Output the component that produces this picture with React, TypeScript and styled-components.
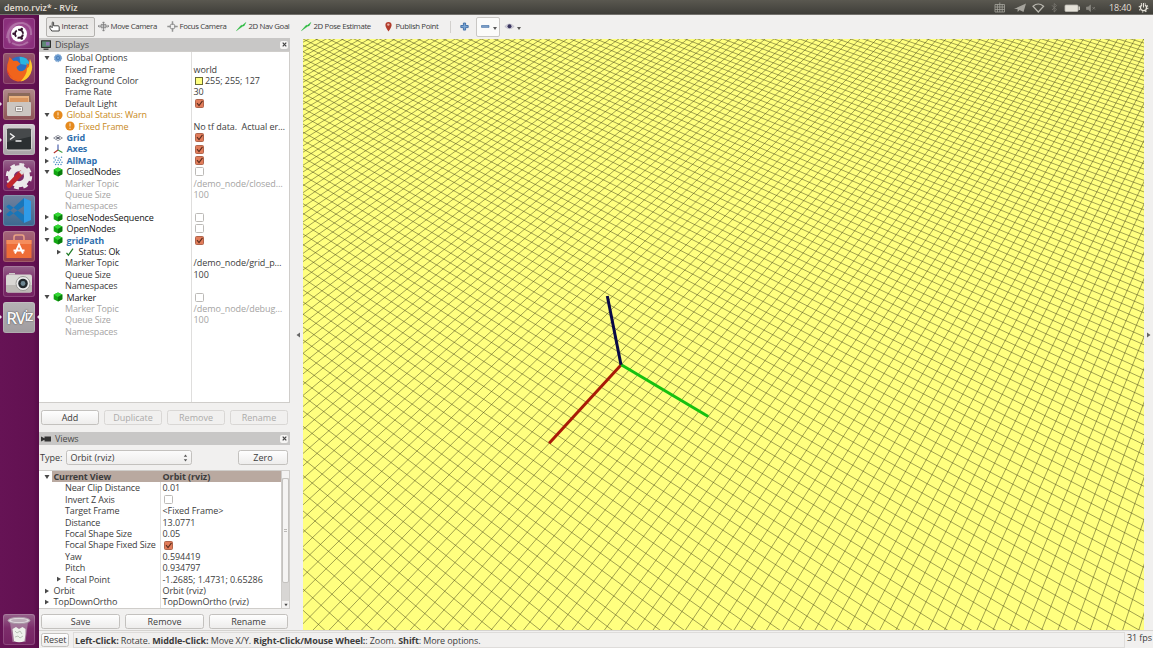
import React from "react";
import styled, { createGlobalStyle, css } from "styled-components";

const Global = createGlobalStyle`
  * { box-sizing: border-box; }
  body { margin: 0; overflow: hidden; background: #f2f1f0; }
`;

const Screen = styled.div`
  width: 1153px;
  height: 648px;
  display: flex;
  flex-direction: column;
  font-family: "Open Sans", "Noto Sans", sans-serif;
  font-size: 9px;
  line-height: 11.4px;
  color: #3c3c3c;
  background: #f1f0ef;
  white-space: pre;
  overflow: hidden;
`;

/* ---------- top bar ---------- */
const TopBar = styled.header`
  height: 15px;
  flex: none;
  display: flex;
  align-items: center;
  padding: 0 4px;
  background: linear-gradient(#5a5850, #403f3a 90%, #8d8b86);
  color: #e2ded4;
`;
const WindowTitle = styled.span`
  font-size: 9px;
  font-weight: 600;
  letter-spacing: 0;
  flex: 1;
`;
const Tray = styled.div`
  display: flex;
  align-items: center;
  svg { display: block; }
`;
const Clock = styled.span`
  width: 23px;
  margin: 0 6px 0 11px;
  font-size: 9px;
  letter-spacing: -0.15px;
`;

/* ---------- launcher ---------- */
const Body = styled.div`
  flex: 1;
  min-height: 0;
  display: flex;
`;
const Launcher = styled.nav`
  width: 39px;
  flex: none;
  display: flex;
  flex-direction: column;
  gap: 3.45px;
  padding: 2.5px 0 3px;
  background: linear-gradient(90deg, #661355, #621151 85%, #570c48);
`;
const Slot = styled.div<{ $end?: boolean }>`
  height: 32px;
  display: grid;
  grid-template-columns: 3px 32px 4px;
  align-items: center;
  margin-top: ${(p) => (p.$end ? "auto" : 0)};
`;
const Tile = styled.div<{ $bg: string }>`
  width: 32px;
  height: 31px;
  border-radius: 3px;
  background: ${(p) => p.$bg};
  box-shadow: inset 0 0 0 1px rgba(255, 255, 255, 0.16);
  svg { display: block; }
`;
const Pip = styled.i<{ $on?: boolean; $right?: boolean }>`
  width: 0;
  height: 0;
  justify-self: ${(p) => (p.$right ? "end" : "start")};
  border: 2.5px solid transparent;
  border-width: 2.5px 0;
  ${(p) =>
    p.$right
      ? css`border-right: 2.5px solid ${p.$on ? "#e9dfe7" : "transparent"};`
      : css`border-left: 2.5px solid ${p.$on ? "#e9dfe7" : "transparent"};`}
`;

/* ---------- main window ---------- */
const Main = styled.main`
  flex: 1;
  min-width: 0;
  display: flex;
  flex-direction: column;
`;
const Toolbar = styled.div`
  height: 24px;
  flex: none;
  display: flex;
  align-items: center;
  padding: 0 0 1px 7px;
  font-size: 7.8px;
`;
const Tool = styled.div<{ $w: number; $active?: boolean; $ls?: number }>`
  width: ${(p) => p.$w}px;
  height: 20px;
  flex: none;
  display: flex;
  align-items: center;
  gap: 1.5px;
  padding-left: 2px;
  letter-spacing: ${(p) => p.$ls ?? -0.36}px;
  border: 1px solid transparent;
  border-radius: 2px;
  ${(p) =>
    p.$active &&
    css`
      border-color: #b4b2af;
      background: linear-gradient(#e7e5e3, #eeedeb);
    `}
  svg { display: block; flex: none; }
`;
const Divider = styled.i`
  width: 1px;
  height: 12px;
  background: #d2d0cd;
  margin: 0 5px 0 2px;
`;
const DropBtn = styled.div<{ $raised?: boolean }>`
  width: 24px;
  height: 20px;
  display: flex;
  align-items: center;
  gap: 2px;
  padding-left: 3px;
  border: 1px solid ${(p) => (p.$raised ? "#c9c7c4" : "transparent")};
  border-radius: 2px;
  background: ${(p) => (p.$raised ? "#fbfbfa" : "none")};
`;
const Caret = styled.i`
  border: 2.3px solid transparent;
  border-top: 3px solid #5a5a5a;
  border-bottom: 0;
  margin-top: 4px;
`;
const Work = styled.div`
  flex: 1;
  min-height: 0;
  display: flex;
`;
const Side = styled.aside`
  width: 251px;
  flex: none;
  display: flex;
  flex-direction: column;
  margin-top: -0.7px;
`;
const Handle = styled.div<{ $w: number; $pad?: number }>`
  width: ${(p) => p.$w}px;
  flex: none;
  display: flex;
  align-items: center;
  justify-content: center;
  padding-left: ${(p) => p.$pad ?? 0}px;
`;
const DockTitle = styled.div`
  height: 13px;
  flex: none;
  display: flex;
  align-items: center;
  gap: 4px;
  padding: 0 2px 0 2px;
  background: #c8c7c6;
  color: #4b4b4b;
  letter-spacing: -0.1px;
  span { flex: 1; }
`;
const CloseBtn = styled.i`
  width: 8px;
  height: 8px;
  border-radius: 2px;
  background: #f6f5f4;
  display: grid;
  place-items: center;
`;

/* ---------- property trees ---------- */
const Tree = styled.div<{ $h: number; $name: number }>`
  height: ${(p) => p.$h}px;
  flex: none;
  display: flex;
  overflow: hidden;
  border: 1px solid #cfcdca;
  border-left: 0;
  background: linear-gradient(90deg, #fff ${(p) => p.$name}px, #dfdedd ${(p) => p.$name}px, #dfdedd ${(p) => p.$name + 1}px, #fff ${(p) => p.$name + 1}px);
`;
const Rows = styled.div`
  flex: 1;
  min-width: 0;
`;
const Row = styled.div<{ $name: number; $sel?: boolean }>`
  height: 11.4px;
  display: grid;
  grid-template-columns: ${(p) => p.$name}px 1fr;
  align-items: center;
  font-weight: ${(p) => (p.$sel ? 700 : 400)};
  background: ${(p) => (p.$sel ? "linear-gradient(90deg, #fff 13px, #b9a9a0 13px)" : "none")};
`;
const tones: Record<string, string> = {
  normal: "#3c3c3c",
  strong: "#151515",
  off: "#a5a4a3",
  warn: "#c98a1c",
  link: "#2f6fae",
};
const NameCell = styled.div<{ $pad: number; $tone: string }>`
  display: flex;
  align-items: center;
  padding-left: ${(p) => p.$pad}px;
  color: ${(p) => tones[p.$tone]};
  font-weight: ${(p) => (p.$tone === "link" ? 700 : "inherit")};
  letter-spacing: -0.12px;
`;
const IconBox = styled.i<{ $w: number }>`
  width: ${(p) => p.$w}px;
  flex: none;
  display: flex;
  svg { display: block; }
`;
const ValueCell = styled.div<{ $off?: boolean }>`
  display: flex;
  align-items: center;
  gap: 2px;
  padding-left: 2.5px;
  letter-spacing: -0.06px;
  color: ${(p) => (p.$off ? tones.off : "inherit")};
`;
const Check = styled.i<{ $on?: boolean }>`
  width: 9px;
  height: 9px;
  margin-left: 1.5px;
  border-radius: 1.5px;
  border: 1px solid ${(p) => (p.$on ? "#b0654c" : "#bcbab7")};
  background: ${(p) => (p.$on ? "#e27d5b" : "#fff")};
  svg { display: block; }
`;
const Swatch = styled.i`
  width: 8px;
  height: 8px;
  margin-left: 1.5px;
  border: 1px solid #6b6b35;
  background: #ffff7f;
`;
const ScrollBar = styled.div`
  width: 8px;
  flex: none;
  display: flex;
  flex-direction: column;
  border-left: 1px solid #cfcdca;
  background: #d8d6d4;
`;
const ScrollEnd = styled.div`
  height: 7px;
  background: #f4f3f2;
  display: grid;
  place-items: center;
`;
const Thumb = styled.div`
  height: 105px;
  border: 1px solid #c4c2bf;
  border-radius: 2px;
  background: #f5f4f3;
  display: grid;
  place-items: center;
`;
const Grip = styled.i`
  width: 3px;
  height: 3px;
  border: 1px solid #bbb9b6;
  border-width: 1px 0;
`;
const Spacer = styled.div`
  flex: 1;
`;
const Foot = styled.div`
  height: 1px;
`;

/* ---------- buttons ---------- */
const ButtonRow = styled.div<{ $gap: number; $mt: number }>`
  display: flex;
  gap: ${(p) => p.$gap}px;
  margin: ${(p) => p.$mt}px 2px 0 2px;
`;
const Button = styled.button<{ $h?: number }>`
  flex: 1 1 0;
  height: ${(p) => p.$h ?? 15}px;
  padding: 0;
  font: inherit;
  line-height: 11px;
  color: #3c3c3c;
  border: 1px solid #c3c1be;
  border-radius: 2.5px;
  background: linear-gradient(#fefefe, #eeedec);
  &:disabled { color: #acabaa; border-color: #d9d7d5; background: #f1f0ef; }
`;
const TypeRow = styled.div`
  display: flex;
  align-items: center;
  margin: 5px 2px 5px 1px;
`;
const Select = styled.div`
  width: 126px;
  height: 15px;
  margin-left: 4px;
  display: flex;
  align-items: center;
  justify-content: space-between;
  padding: 0 3px;
  border: 1px solid #c3c1be;
  border-radius: 2.5px;
  background: linear-gradient(#fbfbfb, #eeedec);
`;
const ZeroWrap = styled.div`
  width: 50px;
  margin-left: auto;
  display: flex;
`;
const StatusBar = styled.footer`
  height: 18px;
  flex: none;
  display: flex;
  align-items: center;
  border-top: 1px solid #d5d3d0;
  background: #f1f0ef;
`;
const ResetBox = styled.div`
  width: 28px;
  display: flex;
  margin: 0 4px 0 2px;
`;
const Hint = styled.div`
  flex: 1;
  height: 16px;
  line-height: 15px;
  border: 1px solid #dedcda;
  padding-left: 1px;
  letter-spacing: -0.1px;
`;
const Fps = styled.div`
  width: 28px;
  padding: 0 0 4px 2px;
  overflow: hidden;
  letter-spacing: -0.1px;
`;
const View = styled.svg`
  display: block;
  flex: none;
`;

/* ---------- 3D scene ---------- */
type V3 = [number, number, number];
const VW = 841;
const VH = 591;
const yaw = 0.594419;
const pitch = 0.934797;
const dist = 13.0771;
const focal: V3 = [-1.2685, 1.4731, 0.65286];
const F = VH / 2 / Math.tan(Math.PI / 8);
const back: V3 = [Math.cos(yaw) * Math.cos(pitch), Math.sin(yaw) * Math.cos(pitch), Math.sin(pitch)];
const right: V3 = [-Math.sin(yaw), Math.cos(yaw), 0];
const up: V3 = [-Math.cos(yaw) * Math.sin(pitch), -Math.sin(yaw) * Math.sin(pitch), Math.cos(pitch)];
const dot = (a: V3, b: V3) => a[0] * b[0] + a[1] * b[1] + a[2] * b[2];
const depth = (p: V3) => dist - dot(back, [p[0] - focal[0], p[1] - focal[1], p[2] - focal[2]]);
const project = (p: V3): [number, number] => {
  const v: V3 = [p[0] - focal[0], p[1] - focal[1], p[2] - focal[2]];
  const d = depth(p);
  return [VW / 2 + (F * dot(right, v)) / d, VH / 2 - (F * dot(up, v)) / d];
};
const segment = (a: V3, b: V3) => {
  const near = 2;
  const da = depth(a);
  const db = depth(b);
  if (da < near && db < near) return "";
  const mix = (t: number): V3 => [a[0] + (b[0] - a[0]) * t, a[1] + (b[1] - a[1]) * t, a[2]];
  const t = (near - da) / (db - da);
  const p = project(da < near ? mix(t) : a);
  const q = project(db < near ? mix(t) : b);
  return `M${p[0].toFixed(2)} ${p[1].toFixed(2)}L${q[0].toFixed(2)} ${q[1].toFixed(2)}`;
};
const CELL = 0.2;
const COUNT = 130;
const reach = CELL * COUNT;
const indices = Array.from({ length: COUNT * 2 + 1 }, (_, i) => (i - COUNT) * CELL);
const alongX = indices.map((k) => segment([-reach, k, 0], [reach, k, 0])).join("");
const alongY = indices.map((k) => segment([k, -reach, 0], [k, reach, 0])).join("");

const Scene = () => (
  <View width={VW} height={VH} viewBox={`0 0 ${VW} ${VH}`}>
    <rect width={VW} height={VH} fill="#ffff7f" />
    <g stroke="#4b4b1c" strokeOpacity="0.62" strokeWidth="0.85" fill="none">
      <path d={alongX} />
      <path d={alongY} />
    </g>
    <path d={segment([0, 0, 0], [2, 0, 0])} stroke="#a81a08" strokeWidth="3" />
    <path d={segment([0, 0, 0], [0, 2, 0])} stroke="#16c010" strokeWidth="3" />
    <path d="M318 325.7L304.3 257" stroke="#0a0a45" strokeWidth="3" />
  </View>
);

/* ---------- small drawings ---------- */
const Arrow = ({ open, size = 6 }: { open?: boolean; size?: number }) => (
  <svg width={size} height={size} viewBox="0 0 6 6">
    <path d={open ? "M.5 1h5L3 5z" : "M1 .8v4.6l4-2.3z"} fill="#4a4a4a" />
  </svg>
);
const Tick = () => (
  <svg width="7" height="7" viewBox="0 0 7 7">
    <path d="M1 3.2l2 2.3L6.5.8" stroke="#5a2d1f" strokeWidth="1.1" fill="none" />
  </svg>
);
const TreeIcon = ({ kind }: { kind: string }) => (
  <svg width="10" height="10" viewBox="0 0 10 10">
    {kind === "gear" && (
      <g>
        <circle cx="5" cy="5" r="3.5" fill="#6c9cd0" stroke="#7fa5cf" strokeWidth="1.3" strokeDasharray="1.3 .9" />
        <circle cx="5" cy="5" r="1.7" fill="none" stroke="#4379b5" strokeWidth=".7" />
      </g>
    )}
    {kind === "warn" && (
      <g>
        <circle cx="5" cy="5" r="4.6" fill="#e58a1e" />
        <path d="M5 2.2v3.3M5 6.7v1.2" stroke="#fbe3c4" strokeWidth="1.1" />
      </g>
    )}
    {kind === "grid" && (
      <g stroke="#7b7f8a" strokeWidth=".8" fill="none">
        <path d="M.6 5L5 2.4 9.400 5 5 7.600zM2.800 3.700l4.400 2.600M7.200 3.700L2.800 6.300" />
        <path d="M3.600 5h2.800" strokeWidth="1.600" stroke="#55596a" />
      </g>
    )}
    {kind === "axes" && (
      <g fill="none" strokeWidth="1.1">
        <path d="M5 6V.5" stroke="#3b53a8" />
        <path d="M5 6L.8 9" stroke="#b3302a" />
        <path d="M5 6l4.4 2.4" stroke="#3c9a3c" />
      </g>
    )}
    {kind === "cloud" && (
      <g fill="#4a8ec2">
        {[[1, 2], [3.5, 1], [6, 2.2], [8.5, 1.3], [2.3, 4], [5, 4.3], [7.5, 4], [1, 6], [3.8, 6.4], [6.4, 6.2], [9, 6.3], [2.6, 8.6], [5.3, 8.4], [8, 8.5]].map(([x, y]) => (
          <circle key={`${x}-${y}`} cx={x} cy={y} r=".75" />
        ))}
      </g>
    )}
    {kind === "cube" && (
      <g>
        <path d="M5 .6l4.3 2v4.6L5 9.6.7 7.2V2.6z" fill="#12a512" />
        <path d="M5 .6l4.3 2L5 5 .7 2.6z" fill="#35d835" />
        <path d="M5 5l4.3-2.400v4.600L5 9.600z" fill="#0a7a0d" />
      </g>
    )}
    {kind === "ok" && <path d="M1.500 5.800l1.900 2.400L8 1.600" stroke="#1f7a25" strokeWidth="1.200" fill="none" />}
  </svg>
);
const ToolIcon = ({ kind }: { kind: string }) => (
  <svg width="11" height="11" viewBox="0 0 11 11">
    {kind === "hand" && (
      <path d="M3.200 7V1.400q.7-.9 1.400 0V4.800h4.600q1 .2 1 1.200v4H2.800L.9 7.200V4.900q1.300-.3 1.300 1.500" fill="#fff" stroke="#333" strokeWidth=".9" />
    )}
    {kind === "move" && (
      <g stroke="#7c7c7c" strokeWidth=".8" fill="none">
        <path d="M3 3.600h5v3.200H3z" fill="#c4c4c4" />
        <path d="M5.500 1v9M0 5.200h3M8 5.200h3M4.200 2.300L5.500.8l1.300 1.500M4.200 8.700l1.300 1.500 1.300-1.500M1.400 3.900L.2 5.200l1.200 1.300M9.600 3.900l1.200 1.300-1.200 1.300" />
      </g>
    )}
    {kind === "focus" && (
      <g stroke="#949494" strokeWidth="1" fill="none">
        <circle cx="5.500" cy="5.500" r="2.600" />
        <path d="M5.500 .3v3.700M5.500 7v3.700M.3 5.500H4M7 5.500h3.700" strokeWidth="1.500" />
      </g>
    )}
    {kind === "goal" && <path d="M.4 9.700l4.800-5.500 1 .3L9.900 1.400 8 5 6.900 5.100z" fill="#25b83a" stroke="#25b83a" strokeWidth=".4" />}
    {kind === "pin" && (
      <g>
        <path d="M5.500 10.600Q2.400 6.400 2.400 4a3.100 3.100 0 0 1 6.200 0q0 2.400-3.100 6.600z" fill="#b23c2c" />
        <circle cx="5.300" cy="3.600" r="1.200" fill="#e9b3aa" />
      </g>
    )}
    {kind === "plus" && <path d="M4.400 2h2.200v2.500h2.600v2.100H6.600v2.500H4.400V6.600H1.800V4.500h2.600z" fill="#7ba5d2" stroke="#2f62a0" strokeWidth=".8" />}
    {kind === "minus" && <path d="M1.500 4.500h7.500v1.900H1.500z" fill="#7fa3c9" stroke="#3a68a3" strokeWidth=".6" />}
    {kind === "eye" && (
      <g>
        <path d="M.8 5.500q4.700-5 9.400 0-4.700 4.400-9.400 0z" fill="#d5d3dc" stroke="#a9a7b5" strokeWidth=".5" />
        <circle cx="5.500" cy="5.300" r="2" fill="#3a3560" />
      </g>
    )}
  </svg>
);
const Cross = () => (
  <svg width="5" height="5" viewBox="0 0 5 5">
    <path d="M.7.7l3.600 3.600M4.300.7L.7 4.300" stroke="#444" strokeWidth="1.200" />
  </svg>
);
const SideMark = ({ flip }: { flip?: boolean }) => (
  <svg width="5" height="6" viewBox="0 0 5 6">
    <path d={flip ? "M1 .5v5L4.500 3z" : "M4 .5v5L.5 3z"} fill="#666" />
  </svg>
);

/* ---------- launcher artwork ---------- */
const Art = ({ kind }: { kind: string }) => (
  <svg width="32" height="31" viewBox="0 0 32 31">
    {kind === "dash" && (
      <g>
        <path d="M4 20Q6 4 20 5q9 2 8 12M7 25Q2 14 12 7M25 24Q17 30 9 25" stroke="#fff" strokeOpacity=".25" strokeWidth="2" fill="none" />
        <circle cx="16" cy="15.800" r="8" fill="#fff" />
        <circle cx="16" cy="15.800" r="4" fill="none" stroke="#35152f" strokeWidth="1.900" strokeDasharray="6.900 1.478" strokeDashoffset="-.74" />
        <circle cx="10.600" cy="15.800" r="1.300" fill="#35152f" />
        <circle cx="18.700" cy="11.100" r="1.300" fill="#35152f" />
        <circle cx="18.700" cy="20.500" r="1.300" fill="#35152f" />
      </g>
    )}
    {kind === "firefox" && (
      <g>
        <circle cx="16.500" cy="14.500" r="11" fill="#2d6fc4" />
        <path d="M16.500 4q7-1 10 6l-3 2-6-1z" fill="#2bb5e0" />
        <path d="M5.500 8l1-4 4 4q4-1 5 1l2 2-4 3q1 5 6 4 5-2 4-8l2 2 1-6q4 8 .5 15-4.500 8-12.500 7.500Q5 26.500 4 17 3.500 12 5.500 8z" fill="#f0641c" />
        <path d="M27 6q4 8 .5 15-4 7-10 7.500 6.500-7 6.500-13l2-2z" fill="#fcc92d" />
        <path d="M4.500 10q-2 14 12 18-9-3-12-8z" fill="#e2302e" />
      </g>
    )}
    {kind === "files" && (
      <g>
        <path d="M5 4h22l1 9H4z" fill="#8b6a5a" />
        <path d="M6 7h20v8H6z" fill="#e9b280" />
        <path d="M7 9h18v6H7z" fill="#d9955f" />
        <rect x="4" y="13" width="24" height="14" rx="1" fill="#cbc5c0" />
        <rect x="12.500" y="17.500" width="7" height="5" rx="1" fill="#f6f4f2" stroke="#7b736e" strokeWidth=".8" />
        <path d="M14 20h4" stroke="#7b736e" />
      </g>
    )}
    {kind === "term" && (
      <g>
        <rect x="3.500" y="4" width="25" height="22" rx="1.500" fill="#2b2f31" stroke="#d7d5d3" strokeWidth="1" />
        <path d="M4 4.500h24v8L4 18z" fill="#fff" fillOpacity=".13" />
        <path d="M7 9.500l4 3-4 3M12.500 17h6" stroke="#f2f2f2" strokeWidth="1.500" fill="none" />
      </g>
    )}
    {kind === "tools" && (
      <g>
        <circle cx="16" cy="16.300" r="8" fill="none" stroke="#ebe8ea" strokeWidth="6" />
        <circle cx="16" cy="16.300" r="11.800" fill="none" stroke="#ebe8ea" strokeWidth="2.800" strokeDasharray="4.800 4.468" />
        <path d="M6 25.500L18 13" stroke="#c1272d" strokeWidth="5" strokeLinecap="round" />
        <path d="M17.500 13.500l4.500-4.500" stroke="#dcdcdc" strokeWidth="4" />
        <path d="M21 3q-4 3-2 8 4 3 8-1h-4l-2-3z" fill="#e6e4e6" />
      </g>
    )}
    {kind === "code" && (
      <g>
        <path d="M21 3l7 3v19l-7 3z" fill="#2f9be8" />
        <path d="M3.500 11L6 9.500 21 20v8L3.500 12zM3.500 20L6 21.500 21 11V3L3.500 19z" fill="#1976b9" />
      </g>
    )}
    {kind === "store" && (
      <g>
        <path d="M11 10V6.500Q11 4 13 4h6q2 0 2 2.500V10" stroke="#e9a183" strokeWidth="1.600" fill="none" />
        <path d="M3.500 9h25v18h-25z" fill="#ee6d37" />
        <path d="M3.500 9h25v4h-25z" fill="#f58d5c" />
        <path d="M12 22.500L16 13.500l4 9M10.500 19.500h11" stroke="#fff" strokeWidth="1.900" fill="none" />
      </g>
    )}
    {kind === "camera" && (
      <g>
        <rect x="3" y="8.500" width="26" height="18" rx="2" fill="#d9d7d4" />
        <path d="M3 19h26v5.500q0 2-2 2H5q-2 0-2-2z" fill="#bcb9b5" />
        <path d="M6 7h6v1.500H6z" fill="#cfccc9" />
        <circle cx="20" cy="17.500" r="7" fill="#ececec" stroke="#8c8a88" strokeWidth=".8" />
        <circle cx="20" cy="17.500" r="4.800" fill="#22282c" />
        <circle cx="20" cy="17.500" r="2.400" fill="#6d8692" />
      </g>
    )}
    {kind === "trash" && (
      <g>
        <path d="M7 8h18l-2.500 20h-13z" fill="#b9a3b4" fillOpacity=".6" />
        <ellipse cx="16" cy="6.500" rx="11" ry="3.200" fill="#dcd5da" stroke="#a995a5" />
        <ellipse cx="16" cy="6.500" rx="8" ry="1.600" fill="#bcadb8" />
        <path d="M9.500 15l3.500-2 3 2 3.500-2 3 2v5l-1 7q-5.500 2.500-10.500 0z" fill="#eef1eb" />
        <path d="M12 17l2 2 3-2 2 3M12 23l3-1 2 2 3-2" stroke="#b9c1b6" fill="none" />
      </g>
    )}
  </svg>
);
const RvizMark = styled.div`
  height: 31px;
  display: flex;
  align-items: center;
  justify-content: center;
  font: 600 17px/31px "Open Sans", sans-serif;
  letter-spacing: -1.6px;
  color: #f8f8f8;
  text-shadow: 0 0 1.5px #555, 0 0 1px #555;
  small { font-size: 14px; margin-top: -3px; }
`;

const purple = "linear-gradient(#96648b, #7d2d6b 45%, #742362)";
const apps = [
  { kind: "dash", bg: "radial-gradient(circle, #b46aa8, #8a2f7b 70%)" },
  { kind: "firefox", bg: "linear-gradient(#96576b, #7d2d5b)" },
  { kind: "files", bg: "linear-gradient(#b08a8a, #8d5355)", on: true },
  { kind: "term", bg: "linear-gradient(#d3ced2, #a8a2a6)", on: true },
  { kind: "tools", bg: purple },
  { kind: "code", bg: "linear-gradient(#72819d, #3c6991)", on: true },
  { kind: "store", bg: "linear-gradient(#a5667c, #8e3d4c)" },
  { kind: "camera", bg: purple },
];

interface Item {
  name: string;
  pad: number;
  arrow?: "open" | "shut";
  icon?: string;
  tone?: string;
  value?: React.ReactNode;
  valueOff?: boolean;
  sel?: boolean;
}
const on = <Check $on><Tick /></Check>;
const off = <Check />;
const displays: Item[] = [
  { name: "Global Options", pad: 5, arrow: "open", icon: "gear" },
  { name: "Fixed Frame", pad: 26, value: "world" },
  { name: "Background Color", pad: 26, value: <><Swatch />255; 255; 127</> },
  { name: "Frame Rate", pad: 26, value: "30" },
  { name: "Default Light", pad: 26, value: on },
  { name: "Global Status: Warn", pad: 5, arrow: "open", icon: "warn", tone: "warn" },
  { name: "Fixed Frame", pad: 26, icon: "warn", tone: "warn", value: "No tf data.  Actual er…" },
  { name: "Grid", pad: 5, arrow: "shut", icon: "grid", tone: "link", value: on },
  { name: "Axes", pad: 5, arrow: "shut", icon: "axes", tone: "link", value: on },
  { name: "AllMap", pad: 5, arrow: "shut", icon: "cloud", tone: "link", value: on },
  { name: "ClosedNodes", pad: 5, arrow: "open", icon: "cube", tone: "strong", value: off },
  { name: "Marker Topic", pad: 26, tone: "off", value: "/demo_node/closed…", valueOff: true },
  { name: "Queue Size", pad: 26, tone: "off", value: "100", valueOff: true },
  { name: "Namespaces", pad: 26, tone: "off" },
  { name: "closeNodesSequence", pad: 5, arrow: "shut", icon: "cube", tone: "strong", value: off },
  { name: "OpenNodes", pad: 5, arrow: "shut", icon: "cube", tone: "strong", value: off },
  { name: "gridPath", pad: 5, arrow: "open", icon: "cube", tone: "link", value: on },
  { name: "Status: Ok", pad: 17, arrow: "shut", icon: "ok", tone: "strong" },
  { name: "Marker Topic", pad: 26, value: "/demo_node/grid_p…" },
  { name: "Queue Size", pad: 26, value: "100" },
  { name: "Namespaces", pad: 26 },
  { name: "Marker", pad: 5, arrow: "open", icon: "cube", tone: "strong", value: off },
  { name: "Marker Topic", pad: 26, tone: "off", value: "/demo_node/debug…", valueOff: true },
  { name: "Queue Size", pad: 26, tone: "off", value: "100", valueOff: true },
  { name: "Namespaces", pad: 26, tone: "off" },
];
const views: Item[] = [
  { name: "Current View", pad: 5, arrow: "open", value: "Orbit (rviz)", sel: true },
  { name: "Near Clip Distance", pad: 26, value: "0.01" },
  { name: "Invert Z Axis", pad: 26, value: off },
  { name: "Target Frame", pad: 26, value: "<Fixed Frame>" },
  { name: "Distance", pad: 26, value: "13.0771" },
  { name: "Focal Shape Size", pad: 26, value: "0.05" },
  { name: "Focal Shape Fixed Size", pad: 26, value: on },
  { name: "Yaw", pad: 26, value: "0.594419" },
  { name: "Pitch", pad: 26, value: "0.934797" },
  { name: "Focal Point", pad: 17, arrow: "shut", value: "-1.2685; 1.4731; 0.65286" },
  { name: "Orbit", pad: 5, arrow: "shut", value: "Orbit (rviz)" },
  { name: "TopDownOrtho", pad: 5, arrow: "shut", value: "TopDownOrtho (rviz)" },
];
const TreeRows = ({ items, name }: { items: Item[]; name: number }) => (
  <Rows>
    {items.map((it, i) => (
      <Row key={i} $name={name} $sel={it.sel}>
        <NameCell $pad={it.pad} $tone={it.tone ?? "normal"}>
          {it.arrow && <IconBox $w={it.icon ? 9 : 9.5}><Arrow open={it.arrow === "open"} /></IconBox>}
          {it.icon && <IconBox $w={13.5}><TreeIcon kind={it.icon} /></IconBox>}
          {it.name}
        </NameCell>
        <ValueCell $off={it.valueOff}>{it.value}</ValueCell>
      </Row>
    ))}
  </Rows>
);

export default function App() {
  return (
    <Screen>
      <Global />
      <TopBar>
        <WindowTitle>demo.rviz* - RViz</WindowTitle>
        <Tray>
          <svg width="104" height="13" viewBox="0 0 104 13">
            <path d="M1 3.500h9.500v7.500H1zM1 6h9.500M1 8.500h9.500M3.400 3v8M5.800 1.500V11M8.200 3v8" stroke="#a5a39c" strokeWidth=".8" fill="none" />
            <path d="M20 8L32 2.500 29.500 11l-4-2-1.800 2-.2-3z" fill="#a5a39c" />
            <path d="M39 5.200q5.200-4.400 10.600 0L44.300 11z" fill="none" stroke="#b8b6ae" strokeWidth="1.200" />
            <path d="M58 4.300l4.500 4.500L60.200 11V2.500l2.300 2.100L58 9" stroke="#77756e" strokeWidth=".9" fill="none" />
            <rect x="71" y="4" width="13" height="6.500" rx="1" fill="#e5e2d9" stroke="#bdbab2" strokeWidth=".8" />
            <path d="M85.200 5.500v3.500" stroke="#e5e2d9" strokeWidth="1.200" />
            <path d="M92.500 6h1.700L96.500 4v6.500L94.200 8.500h-1.700zM98.500 6l2.500 2.500M101 6l-2.500 2.500" fill="#8a8881" stroke="#8a8881" strokeWidth=".7" />
          </svg>
          <Clock>18:40</Clock>
          <svg width="11" height="11" viewBox="0 0 11 11">
            <circle cx="5.500" cy="5.700" r="3" fill="none" stroke="#e5e2d9" strokeWidth="1.300" />
            <circle cx="5.500" cy="5.700" r="4.300" fill="none" stroke="#e5e2d9" strokeWidth="1.200" strokeDasharray="1.400 2" />
            <path d="M5.500 1v4.500" stroke="#45443e" strokeWidth="2.600" />
            <path d="M5.500 1v4.500" stroke="#e5e2d9" strokeWidth="1.200" />
          </svg>
        </Tray>
      </TopBar>
      <Body>
        <Launcher>
          {apps.map((a) => (
            <Slot key={a.kind}>
              <Pip $on={a.on} />
              <Tile $bg={a.bg}><Art kind={a.kind} /></Tile>
            </Slot>
          ))}
          <Slot>
            <Pip $on />
            <Tile $bg="linear-gradient(#b5b2b4, #a09c9f)"><RvizMark>RV<small>iz</small></RvizMark></Tile>
            <Pip $on $right />
          </Slot>
          <Slot $end>
            <Pip />
            <Tile $bg={purple}><Art kind="trash" /></Tile>
          </Slot>
        </Launcher>
        <Main>
          <Toolbar>
            <Tool $w={49} $active $ls={-0.2}><ToolIcon kind="hand" />Interact</Tool>
            <Tool $w={69}><ToolIcon kind="move" />Move Camera</Tool>
            <Tool $w={69}><ToolIcon kind="focus" />Focus Camera</Tool>
            <Tool $w={65}><ToolIcon kind="goal" />2D Nav Goal</Tool>
            <Tool $w={82}><ToolIcon kind="goal" />2D Pose Estimate</Tool>
            <Tool $w={68}><ToolIcon kind="pin" />Publish Point</Tool>
            <Divider />
            <Tool $w={20}><ToolIcon kind="plus" /></Tool>
            <DropBtn $raised><ToolIcon kind="minus" /><Caret /></DropBtn>
            <DropBtn><ToolIcon kind="eye" /><Caret /></DropBtn>
          </Toolbar>
          <Work>
            <Side>
              <DockTitle>
                <svg width="10" height="10" viewBox="0 0 10 10">
                  <rect x=".6" y=".8" width="8.800" height="6.600" fill="#5d8a74" stroke="#222" strokeWidth="1" />
                  <path d="M5 2h3.500v3.500H5z" fill="#8e78b4" />
                  <path d="M2.500 9.200h5" stroke="#222" strokeWidth="1.200" />
                </svg>
                <span>Displays</span>
                <CloseBtn><Cross /></CloseBtn>
              </DockTitle>
              <Tree $h={351.5} $name={152}><TreeRows items={displays} name={152} /></Tree>
              <ButtonRow $gap={5} $mt={7}>
                <Button>Add</Button>
                <Button disabled>Duplicate</Button>
                <Button disabled>Remove</Button>
                <Button disabled>Rename</Button>
              </ButtonRow>
              <Spacer />
              <DockTitle>
                <svg width="10" height="8" viewBox="0 0 10 8">
                  <path d="M0 1.500l3.500 1.800V1.500H10v5H3.500V4.800L0 6.500z" fill="#333" />
                </svg>
                <span>Views</span>
                <CloseBtn><Cross /></CloseBtn>
              </DockTitle>
              <TypeRow>
                Type:
                <Select>
                  Orbit (rviz)
                  <svg width="5" height="8" viewBox="0 0 5 8"><path d="M2.500.5L4.200 2.800H.8zM2.500 7.500L.8 5.200h3.400z" fill="#555" /></svg>
                </Select>
                <ZeroWrap><Button>Zero</Button></ZeroWrap>
              </TypeRow>
              <Tree $h={139} $name={121}>
                <TreeRows items={views} name={121} />
                <ScrollBar>
                  <ScrollEnd />
                  <Thumb><Grip /></Thumb>
                  <Spacer />
                  <ScrollEnd><Arrow open size={4} /></ScrollEnd>
                </ScrollBar>
              </Tree>
              <ButtonRow $gap={5} $mt={5}>
                <Button>Save</Button>
                <Button>Remove</Button>
                <Button>Rename</Button>
              </ButtonRow>
              <Foot />
            </Side>
            <Handle $w={13} $pad={4}><SideMark /></Handle>
            <Scene />
            <Handle $w={9}><SideMark flip /></Handle>
          </Work>
          <StatusBar>
            <ResetBox><Button $h={14}>Reset</Button></ResetBox>
            <Hint><b>Left-Click:</b> Rotate. <b>Middle-Click:</b> Move X/Y. <b>Right-Click/Mouse Wheel:</b>: Zoom. <b>Shift</b>: More options.</Hint>
            <Fps>31 fps</Fps>
          </StatusBar>
        </Main>
      </Body>
    </Screen>
  );
}
